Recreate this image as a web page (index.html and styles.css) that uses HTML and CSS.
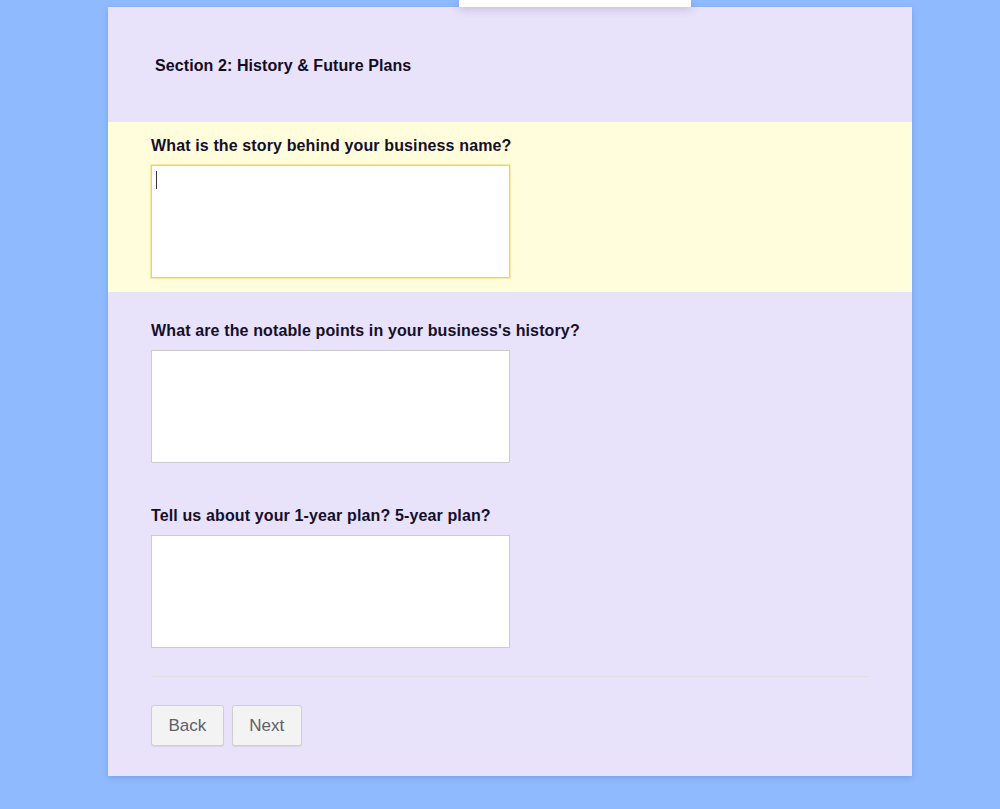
FILE: index.html
```html
<!DOCTYPE html>
<html>
<head>
<meta charset="utf-8">
<link rel="stylesheet" href="styles.css">
</head>
<body>
<div class="tab"></div>
<form class="card">
  <div class="section-head">
    <h2 class="section-title">Section 2: History &amp; Future Plans</h2>
  </div>
  <div class="question active">
    <label class="q-label">What is the story behind your business name?</label>
    <div class="field">
      <textarea class="answer focused"></textarea>
      <span class="caret"></span>
    </div>
  </div>
  <div class="question">
    <label class="q-label">What are the notable points in your business's history?</label>
    <div class="field"><textarea class="answer"></textarea></div>
  </div>
  <div class="question">
    <label class="q-label">Tell us about your 1-year plan? 5-year plan?</label>
    <div class="field"><textarea class="answer"></textarea></div>
  </div>
  <div class="footer">
    <button type="button" class="btn">Back</button>
    <button type="button" class="btn">Next</button>
  </div>
</form>
</body>
</html>
```

FILE: styles.css
```css
html, body {
  margin: 0;
  padding: 0;
}
body {
  background: #8fbbfe;
  font-family: "Liberation Sans", Arial, sans-serif;
  height: 809px;
  overflow: hidden;
  position: relative;
}
.tab {
  position: absolute;
  left: 459px;
  top: 0;
  width: 232px;
  height: 7px;
  background: #ffffff;
  box-shadow: 0 2px 8px rgba(90, 70, 150, 0.28);
  z-index: 2;
}
.card {
  width: 804px;
  margin: 7px 0 0 108px;
  background: #e8e2fa;
  box-shadow: 0 2px 6px rgba(60, 80, 160, 0.25);
  padding-bottom: 30px;
  box-sizing: border-box;
}
.section-head {
  height: 115px;
  display: flex;
  align-items: center;
  padding: 0 47px;
  box-sizing: border-box;
}
.section-title {
  margin: 0;
  font-size: 16px;
  font-weight: bold;
  line-height: 18px;
  letter-spacing: 0.09px;
  color: #120c26;
  position: relative;
  top: 1px;
}
.question {
  padding: 15px 44px 14px 43px;
  margin-bottom: 15px;
}
.question.active {
  background: #fffddb;
}
.q-label {
  display: block;
  font-size: 16px;
  font-weight: bold;
  line-height: 18px;
  letter-spacing: 0.13px;
  color: #150f2b;
  margin-bottom: 10px;
}
.field {
  position: relative;
  width: 359px;
  height: 113px;
}
.answer {
  display: block;
  width: 359px;
  height: 113px;
  box-sizing: border-box;
  border: 1px solid #cdcbd2;
  background: #ffffff;
  resize: none;
  margin: 0;
  padding: 4px;
  outline: none;
}
.answer.focused {
  border: 1px solid #fbd13c;
  box-shadow: 0 0 0 0.5px #fcd850;
}
.caret {
  position: absolute;
  left: 5px;
  top: 6px;
  width: 1px;
  height: 18px;
  background: #3a2f48;
}
.footer {
  margin: -1px 44px 0 43px;
  border-top: 1px solid #e2dfe3;
  padding-top: 28px;
  display: flex;
  gap: 8px;
}
.btn {
  height: 41px;
  padding: 0 16.5px;
  background: #f3f3f3;
  border: 1px solid #cfcfd2;
  border-radius: 3px;
  font-family: "Liberation Sans", Arial, sans-serif;
  font-size: 17px;
  color: #5f5f68;
  box-shadow: 0 1px 1px rgba(0, 0, 0, 0.06);
}
```
